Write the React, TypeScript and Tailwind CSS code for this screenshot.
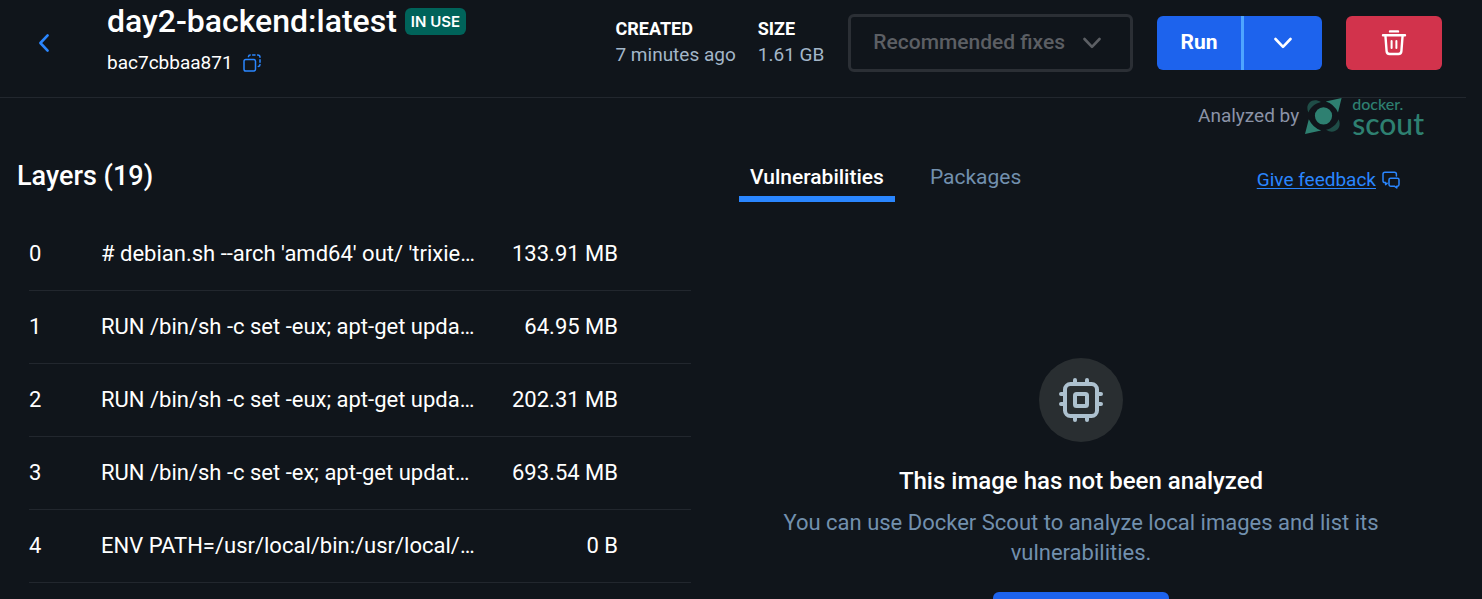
import React from "react";

const layers = [
  { id: 0, command: "# debian.sh --arch 'amd64' out/ 'trixie…", size: "133.91 MB" },
  { id: 1, command: "RUN /bin/sh -c set -eux; apt-get upda…", size: "64.95 MB" },
  { id: 2, command: "RUN /bin/sh -c set -eux; apt-get upda…", size: "202.31 MB" },
  { id: 3, command: "RUN /bin/sh -c set -ex; apt-get updat…", size: "693.54 MB" },
  { id: 4, command: "ENV PATH=/usr/local/bin:/usr/local/…", size: "0 B" },
];

function ChevronDown() {
  return (
    <svg width="18" height="12" viewBox="0 0 18 12" fill="none" stroke="currentColor" strokeWidth="2.6" strokeLinecap="round" strokeLinejoin="round" aria-hidden="true">
      <path d="M1.5 2 9 9.8 16.5 2" />
    </svg>
  );
}

function BackIcon() {
  return (
    <svg width="12" height="20" viewBox="0 0 12 20" fill="none" stroke="currentColor" strokeWidth="2.6" strokeLinecap="round" strokeLinejoin="round" aria-hidden="true">
      <path d="M9.6 2.4 2.4 10 9.6 17.6" />
    </svg>
  );
}

function CopyIcon() {
  return (
    <svg width="18" height="18" viewBox="0 0 18 18" fill="none" stroke="currentColor" strokeWidth="1.5" strokeLinecap="round" aria-hidden="true">
      <rect x="1" y="5.5" width="11.5" height="11.5" rx="1.8" />
      <path d="M5.5 2.6Q5.7 1 7.2 1M9.6 1h2.4M14.6 1Q17 1 17 3.2M17 5.8v2.4M17 10.6Q17 12.4 15.3 12.5" />
    </svg>
  );
}

function TrashIcon() {
  return (
    <svg width="26" height="26" viewBox="0 0 26 26" fill="none" stroke="currentColor" strokeWidth="2.4" strokeLinecap="round" strokeLinejoin="round" aria-hidden="true">
      <path d="M9 1.4h8M2 5.2h22M4.4 5.6l1.2 15.6a3 3 0 0 0 3 2.8h8.8a3 3 0 0 0 3-2.8l1.2-15.6" />
      <path d="M10.6 11v7M15.4 11v7" strokeWidth="2" />
    </svg>
  );
}

function FeedbackIcon() {
  return (
    <svg width="18" height="18" viewBox="0 0 18 18" fill="none" stroke="currentColor" strokeWidth="1.5" strokeLinecap="round" strokeLinejoin="round" aria-hidden="true">
      <path d="M5.2 12.2 3.6 13.6V11.6H2.8Q1 11.6 1 9.8V3.2Q1 1.2 3 1.2h9.4q2 0 2 2V5" />
      <path d="M8.6 7.2h6.8q1.6 0 1.6 1.6v4.8q0 1.6-1.6 1.6H14.8V17L12.4 15.2H8.6q-1.6 0-1.6-1.6v-4.8q0-1.6 1.6-1.6z" />
    </svg>
  );
}

function ScoutMark() {
  return (
    <svg width="37" height="36" viewBox="0 0 37 36" aria-hidden="true">
      <path d="M36.6 0 33 14.6Q29 6 20.8 3.6Z" fill="#2e8071" />
      <path d="M0 36 3.8 21.2Q8 30 16.2 32.4Z" fill="#2e8071" />
      <circle cx="18.5" cy="17.8" r="8.6" fill="#2e8071" />
      <path d="M3.4 14.6C-.6 6 7.4-1.4 16 4C10 5.4 5.6 9 3.4 14.6Z" fill="#1f4d47" />
      <path d="M33.6 21.2C37.6 29.8 29.6 37.2 21 31.8C27 30.4 31.4 26.8 33.6 21.2Z" fill="#1f4d47" />
    </svg>
  );
}

function ChipIcon() {
  return (
    <svg width="44" height="44" viewBox="0 0 44 44" fill="none" stroke="currentColor" strokeWidth="4" strokeLinecap="round" aria-hidden="true">
      <rect x="6" y="6" width="32" height="32" rx="5.5" />
      <rect x="16" y="16" width="12" height="12" rx="1.5" />
      <path d="M16 5V2M28 5V2M16 39v3M28 39v3M5 16H2M5 26H2M39 16h3M39 26h3" />
    </svg>
  );
}

function Header() {
  return (
    <header className="mr-4 flex h-[98px] items-start border-b border-[#22272e] pr-6">
      <button type="button" aria-label="Back" className="ml-[38px] mt-[33px] w-[69px] text-[#2a86ff]">
        <BackIcon />
      </button>
      <div className="flex-1">
        <div className="flex h-[42px] items-center gap-2">
          <h1 className="text-[32px] font-medium leading-[42px]">day2-backend:latest</h1>
          <span className="rounded-md bg-[#00635a] px-1.5 font-[Inter] text-[15px] font-semibold leading-[27px]">IN USE</span>
        </div>
        <div className="flex items-center gap-2.5 pt-[9px]">
          <span className="text-[19px] leading-6">bac7cbbaa871</span>
          <button type="button" aria-label="Copy image ID" className="text-[#2a86ff]">
            <CopyIcon />
          </button>
        </div>
      </div>
      <dl className="mt-4 flex gap-[22px] text-[19px] leading-[26px]">
        <div>
          <dt className="text-[18px] font-bold">CREATED</dt>
          <dd className="text-[#a3b7c9]">7 minutes ago</dd>
        </div>
        <div>
          <dt className="text-[18px] font-bold">SIZE</dt>
          <dd className="text-[#a3b7c9]">1.61 GB</dd>
        </div>
      </dl>
      <button type="button" disabled className="ml-6 mt-3.5 flex h-[58px] items-center gap-[18px] rounded-md border-3 border-[#2b2f35] pl-[22px] pr-[29px] text-[21px] font-medium text-[#5c5f64]">
        Recommended fixes
        <ChevronDown />
      </button>
      <div className="ml-6 mt-4 flex h-[54px] overflow-hidden rounded-md bg-[#1d63ed]">
        <button type="button" className="w-[84px] text-[21px] font-bold">Run</button>
        <button type="button" aria-label="Run options" className="flex w-[81px] items-center justify-center border-l-3 border-[#4ea5ff]">
          <ChevronDown />
        </button>
      </div>
      <button type="button" aria-label="Delete image" className="ml-6 mt-4 flex h-[54px] w-24 items-center justify-center rounded-md bg-[#d2334c]">
        <TrashIcon />
      </button>
    </header>
  );
}

function Layers() {
  return (
    <section className="pt-6">
      <h2 className="text-[27px] font-medium leading-9">Layers (19)</h2>
      <div className="mt-[23px] pl-3">
        <table className="w-full table-fixed border-collapse text-[22px]">
          <tbody>
            {layers.map((layer) => (
              <tr key={layer.id} className="h-[73px] border-b border-[#22272e]">
                <td className="w-[72px]">{layer.id}</td>
                <td className="truncate">{layer.command}</td>
                <td className="w-[200px] pr-[73px] text-right">{layer.size}</td>
              </tr>
            ))}
          </tbody>
        </table>
      </div>
    </section>
  );
}

function Analysis() {
  return (
    <section>
      <div role="tablist" className="flex h-[68px] items-start pt-[22px] text-[21px]">
        <button type="button" role="tab" aria-selected="true" className="h-[46px] border-b-6 border-[#2a86ff] px-[11px] pt-1 font-medium">
          Vulnerabilities
        </button>
        <button type="button" role="tab" aria-selected="false" className="ml-6 h-[46px] border-b-6 border-transparent px-[11px] pt-1 text-[#7290ae]">
          Packages
        </button>
        <a href="#feedback" className="ml-auto mr-[23px] flex items-center gap-1.5 pt-2.5 text-[19px] leading-7 text-[#2a86ff]">
          <span className="underline underline-offset-2">Give feedback</span>
          <FeedbackIcon />
        </a>
      </div>
      <div className="flex flex-col items-center pt-[156px] text-center">
        <div className="flex size-[84px] items-center justify-center rounded-full bg-[#292e31] text-[#adc1cf]">
          <ChipIcon />
        </div>
        <h3 className="mt-[21px] text-[24px] font-medium leading-9">This image has not been analyzed</h3>
        <p className="mt-[9px] max-w-[620px] text-[22px] leading-[30px] text-[#7290ae]">
          You can use Docker Scout to analyze local images and list its vulnerabilities.
        </p>
        <button type="button" aria-label="Start analysis" className="mt-6 h-[54px] w-44 rounded-md bg-[#1d63ed]" />
      </div>
    </section>
  );
}

export default function App() {
  return (
    <div className="h-screen overflow-hidden bg-[#10151b] font-[Roboto,sans-serif] text-white">
      <Header />
      <main>
        <div className="flex h-9 items-center justify-end pr-[58px]">
          <span className="mr-1.5 text-[19px] text-[#8b93a7]">Analyzed by</span>
          <ScoutMark />
          <div className="ml-2.5 flex flex-col font-[Lato,sans-serif] text-[#2e8071]">
            <span className="text-[16px] font-medium leading-[14px]">docker.</span>
            <span className="text-[30px] font-medium leading-[24px]">scout</span>
          </div>
        </div>
        <div className="grid grid-cols-[674fr_684fr] gap-12 pl-[17px] pr-[59px]">
          <Layers />
          <Analysis />
        </div>
      </main>
    </div>
  );
}
